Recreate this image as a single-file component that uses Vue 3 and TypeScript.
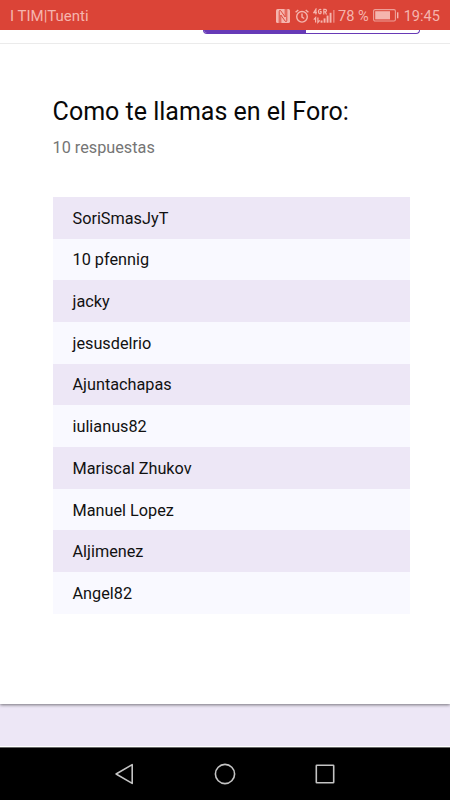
<script setup lang="ts">
const respuestas: string[] = [
  'SoriSmasJyT',
  '10 pfennig',
  'jacky',
  'jesusdelrio',
  'Ajuntachapas',
  'iulianus82',
  'Mariscal Zhukov',
  'Manuel Lopez',
  'Aljimenez',
  'Angel82',
]
</script>

<template>
  <div class="screen">
    <header class="status">
      <span class="carrier">I TIM|Tuenti</span>
      <div class="indicators">
        <svg class="nfc" width="14" height="14" viewBox="0 0 14 14">
          <rect width="14" height="14" rx="1.6" fill="#f5b5ae" />
          <path d="M3.2 14V2.6Q3.2 1 4.6 1.6L9.2 8V0M10.8 0v11.4q0 1.6-1.4 1L4.8 6v8" fill="none" stroke="#db4437" stroke-width=".95" />
        </svg>
        <svg class="alarm" width="14" height="14" viewBox="0 0 14 14" fill="none" stroke="#f5b5ae" stroke-width="1.4">
          <circle cx="7" cy="7.8" r="5.3" />
          <path d="M7 4.6v3.5l2.2 1.4M.6 3.3 3.3 .9M10.7 .9l2.7 2.4" />
        </svg>
        <svg class="signal" width="23" height="16" viewBox="0 0 23 16">
          <g fill="none" stroke="#f5b5ae" stroke-width="1.2">
            <path d="M2.9 6.4V1.2L.7 4.7h3.2M8.1 2.1C7.6 1 5.4 1.1 5.4 3.5s2.2 2.9 2.7 1.3V3.6H6.8M10.8 6.4V1.4h1.5c1.6 0 1.6 2.4 0 2.4h-1.5M12.2 3.8l1.3 2.6" />
            <path d="M2.6 14.4V9.6L.8 11.7M4.9 9.6v4.8l1.8-2.1" />
          </g>
          <g fill="#f5b5ae">
            <rect x="7.6" y="12.5" width="1.9" height="2.2" />
            <rect x="10.6" y="10.4" width="1.9" height="4.3" />
            <rect x="13.6" y="7.6" width="1.9" height="7.1" />
            <rect x="16.6" y="4.8" width="1.9" height="9.9" />
            <rect x="20" y="2" width="1.6" height="12.7" opacity=".55" />
          </g>
        </svg>
        <span class="percent">78 %</span>
        <svg class="battery" width="26" height="13" viewBox="0 0 26 13">
          <rect x=".6" y=".6" width="21.8" height="11.4" rx="1.4" fill="none" stroke="#eda099" stroke-width="1.1" />
          <rect x="2.2" y="2.2" width="14.8" height="8.2" fill="#f5b5ae" />
          <rect x="24" y="3.3" width="1.4" height="6" fill="#f5b5ae" />
        </svg>
        <span class="clock">19:45</span>
      </div>
    </header>

    <div class="tabstrip">
      <div class="toggle"><span class="selected"></span><span class="unselected"></span></div>
    </div>

    <main class="card">
      <h1>Como te llamas en el Foro:</h1>
      <p class="count">10 respuestas</p>
      <ul class="answers">
        <li v-for="nombre in respuestas" :key="nombre">{{ nombre }}</li>
      </ul>
    </main>

    <div class="backdrop"></div>

    <nav class="navbar">
      <svg width="22" height="22" viewBox="0 0 22 22"><path d="M18.2 1.6v18.8L2.1 11Z" /></svg>
      <svg width="22" height="22" viewBox="0 0 22 22"><circle cx="11" cy="11" r="9.6" /></svg>
      <svg width="22" height="22" viewBox="0 0 22 22"><rect x="2.3" y="2.3" width="17.4" height="17.4" rx=".5" /></svg>
    </nav>
  </div>
</template>

<style>
body {
  margin: 0;
  background: #fff;
}
</style>

<style scoped>
.screen {
  display: flex;
  flex-direction: column;
  width: 450px;
  height: 800px;
  overflow: hidden;
  background: #ede7f6;
  font-family: Roboto, 'Liberation Sans', sans-serif;
}

.status {
  display: flex;
  flex: none;
  align-items: center;
  justify-content: space-between;
  box-sizing: border-box;
  height: 30px;
  padding: 1px 10px 0;
  background: #db4437;
  color: #f5b5ae;
  font-size: 14.6px;
  line-height: 30px;
  white-space: nowrap;
}

.carrier {
  font-size: 15px;
}

.indicators {
  display: flex;
  align-items: center;
}

.alarm {
  margin-left: 5px;
}

.signal {
  margin-left: 4px;
}

.percent {
  margin-left: 2px;
}

.battery {
  margin-left: 4px;
}

.clock {
  margin-left: 5px;
}

.tabstrip {
  display: flex;
  flex: none;
  justify-content: flex-end;
  box-sizing: border-box;
  height: 14px;
  padding-right: 30px;
  border-bottom: 1px solid #ebebeb;
  background: #fff;
}

.toggle {
  display: flex;
  box-sizing: border-box;
  width: 217px;
  height: 4px;
  overflow: hidden;
  border: 1px solid #673ab7;
  border-top: 0;
  border-radius: 0 0 4px 4px;
}

.selected {
  width: 102px;
  background: #673ab7;
}

.card {
  position: relative;
  flex: none;
  box-sizing: border-box;
  height: 660px;
  padding: 52px 40px 0 53px;
  background: #fff;
  box-shadow: 0 1px 3px rgba(0, 0, 0, 0.5);
  clip-path: inset(0 0 -6px 0);
}

h1 {
  margin: 0 0 0 -0.4px;
  color: #080808;
  font-size: 25px;
  font-weight: 400;
  line-height: 32px;
  white-space: nowrap;
}

.count {
  margin: 10px 0 0 -0.5px;
  color: #757575;
  font-size: 16.25px;
  line-height: 20px;
}

.answers {
  margin: 39px 0 0;
  padding: 0;
  list-style: none;
}

.answers li {
  box-sizing: border-box;
  height: 41.68px;
  padding: 0.8px 0 0 19.5px;
  background: #f9f9ff;
  color: #111;
  font-size: 16.25px;
  line-height: 41.68px;
}

.answers li:nth-child(odd) {
  background: #ede7f6;
}

.backdrop {
  flex: 1;
  border-bottom: 1px solid #fff;
}

.navbar {
  display: flex;
  flex: none;
  align-items: center;
  justify-content: space-between;
  box-sizing: border-box;
  height: 53px;
  padding: 0 114px;
  border-top: 1px solid #666;
  background: #000;
}

.navbar svg {
  fill: none;
  stroke: #c4c4c4;
  stroke-width: 1.6;
  stroke-linejoin: round;
}
</style>
